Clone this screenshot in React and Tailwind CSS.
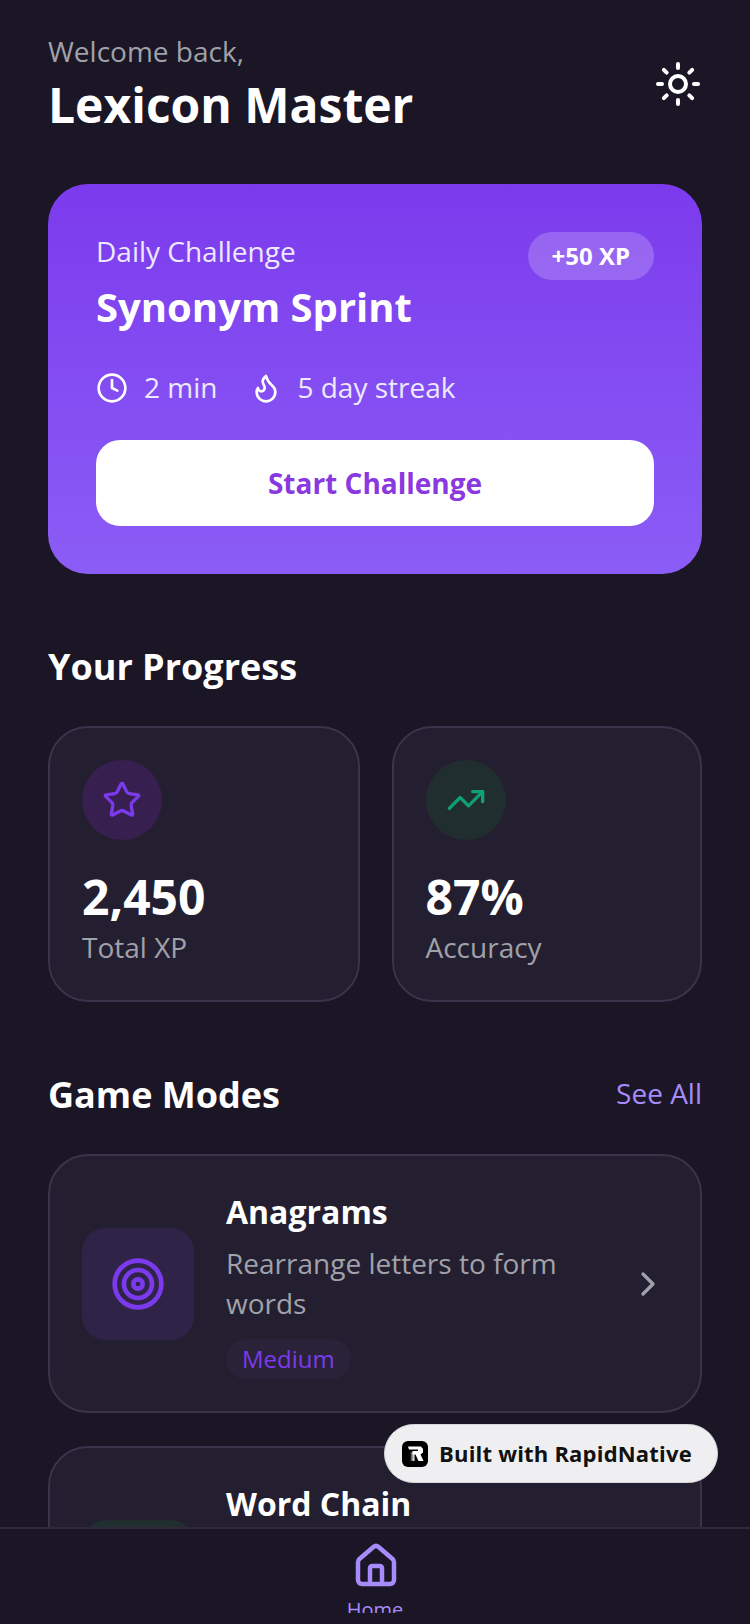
import React from 'react';
import { Sun, Clock, Flame, Star, TrendingUp, Target, ChevronRight, House, Link2 } from 'lucide-react';

const StatCard = ({ icon: Icon, iconColor, circle, value, label, className }) => (
  <div className={`h-[276px] rounded-[40px] border-2 border-[#39344a] bg-[#231f30] px-8 pt-8 ${className}`}>
    <div className={`w-20 h-20 rounded-full flex items-center justify-center ${circle}`}>
      <Icon className={`w-10 h-10 ${iconColor}`} strokeWidth={2} />
    </div>
    <p className="mt-[29px] text-[48px] leading-[56px] font-bold text-white">{value}</p>
    <p className="mt-[2px] text-[28px] leading-[40px] text-[#a1a1aa]">{label}</p>
  </div>
);

const ModeCard = ({ icon: Icon, iconColor, box, title, desc, level, pill, pillText }) => (
  <div className="shrink-0 flex items-center rounded-[40px] border-2 border-[#39344a] bg-[#231f30] px-8 pt-[34px] pb-8">
    <div className={`shrink-0 mb-[2px] w-28 h-28 rounded-3xl flex items-center justify-center ${box}`}>
      <Icon className={`w-14 h-14 ${iconColor}`} strokeWidth={2} />
    </div>
    <div className="flex-1 ml-8 pr-4">
      <p className="text-[32px] leading-[44px] font-bold text-white">{title}</p>
      <p className="mt-[9px] text-[28px] leading-[40px] text-[#a1a1aa]">{desc}</p>
      <span className={`inline-block mt-4 rounded-3xl px-4 py-1 text-[24px] leading-[32px] ${pill} ${pillText}`}>{level}</span>
    </div>
    <ChevronRight className="shrink-0 mb-[2px] w-10 h-10 text-[#a1a1aa]" strokeWidth={2} />
  </div>
);

export default function App() {
  return (
    <div className="relative w-[750px] h-[1624px] flex flex-col overflow-hidden bg-[#1a1625] font-['Open_Sans',sans-serif]">
      <div className="flex-1 min-h-0 overflow-hidden px-12 pt-[35px]">
        {/* Header */}
        <div className="flex items-center justify-between">
          <div>
            <p className="text-[28px] leading-[32px] text-[#a1a1aa]">Welcome back,</p>
            <h1 className="mt-[6px] text-[48px] leading-[64px] font-bold text-white">Lexicon Master</h1>
          </div>
          <Sun className="mb-1 w-12 h-12 text-white" strokeWidth={2} />
        </div>

        {/* Daily challenge */}
        <div className="mt-[47px] h-[390px] rounded-[40px] bg-gradient-to-b from-[#7c3aed] to-[#8b5cf6] p-12">
          <div className="flex items-start justify-between">
            <div>
              <p className="text-[28px] leading-[38px] text-[#ede9fe]">Daily Challenge</p>
              <h2 className="mt-[11px] text-[40px] leading-[52px] font-bold text-white">Synonym Sprint</h2>
            </div>
            <span className="rounded-3xl bg-white/20 px-6 h-12 flex items-center text-[24px] font-bold text-white">+50 XP</span>
          </div>
          <div className="mt-[34px] flex items-center text-[28px] leading-[40px] text-[#ede9fe]">
            <Clock className="mt-px w-8 h-8 text-white" strokeWidth={2} />
            <span className="ml-4">2 min</span>
            <Flame className="mt-px ml-[33px] w-8 h-8 text-white" strokeWidth={2} />
            <span className="ml-[15px]">5 day streak</span>
          </div>
          <div className="mt-[33px] h-[86px] rounded-3xl bg-white flex items-center justify-center text-[28px] font-bold text-[#8a38e0]">
            Start Challenge
          </div>
        </div>

        {/* Progress */}
        <h3 className="mt-[69px] text-[36px] leading-[48px] font-bold text-white">Your Progress</h3>
        <div className="mt-[35px] flex gap-8">
          <StatCard className="w-[311.5px]" icon={Star} iconColor="text-[#7c3aed]" circle="bg-[#372050]" value="2,450" label="Total XP" />
          <StatCard className="flex-1" icon={TrendingUp} iconColor="text-[#10a070]" circle="bg-[#212e30]" value="87%" label="Accuracy" />
        </div>

        {/* Game modes */}
        <div className="mt-[69px] flex items-center justify-between">
          <h3 className="text-[36px] leading-[48px] font-bold text-white">Game Modes</h3>
          <span className="mb-1 text-[28px] leading-[40px] text-[#a78bfa]">See All</span>
        </div>
        <div className="mt-[35px] flex flex-col gap-[33px]">
          <ModeCard icon={Target} iconColor="text-[#7c3aed]" box="bg-[#2f2447]" title="Anagrams" desc="Rearrange letters to form words" level="Medium" pill="bg-[#2a2238]" pillText="text-[#7c3aed]" />
          <ModeCard icon={Link2} iconColor="text-[#10a070]" box="bg-[#212e30]" title="Word Chain" desc="Connect words using their last letter" level="Easy" pill="bg-[#212e30]" pillText="text-[#10a070]" />
        </div>
      </div>

      {/* Bottom tab bar */}
      <div className="shrink-0 h-[86px] overflow-hidden border-t-2 border-[#2e2a3b] bg-[#1a1625] flex flex-col items-center pt-[13px]">
        <House className="shrink-0 ml-[2px] w-12 h-12 text-[#a78bfa]" strokeWidth={2.25} />
        <span className="mt-[6px] text-[20px] leading-[28px] text-[#a78bfa]">Home</span>
      </div>
      <div className="shrink-0 h-[11px] bg-[#1a1625]" />

      {/* Floating badge */}
      <div className="absolute left-[384px] top-[1424px] w-[334px] h-[59px] rounded-full bg-[#efeff1] border border-[#d8d8dc] flex items-center pl-[17px] gap-[11px]">
        <svg width="26" height="26" viewBox="0 0 26 26">
          <defs>
            <linearGradient id="rn-fade" x1="0" y1="0" x2="1" y2="0">
              <stop offset="0" stopColor="#fff" stopOpacity="0.2" />
              <stop offset="1" stopColor="#fff" />
            </linearGradient>
          </defs>
          <rect width="26" height="26" rx="6" fill="#000" />
          <path d="M6 5.5h13l2 2.5v3.5l-2.5 2 3 6.5h-5l-3-6.5H10.5V10h5.5V8.5H7z" fill="#fff" />
          <path d="M8.5 11h4v9h-4z" fill="url(#rn-fade)" />
        </svg>
        <span className="text-[22px] font-bold tracking-[0.2px] text-[#111]">Built with RapidNative</span>
      </div>
    </div>
  );
}
